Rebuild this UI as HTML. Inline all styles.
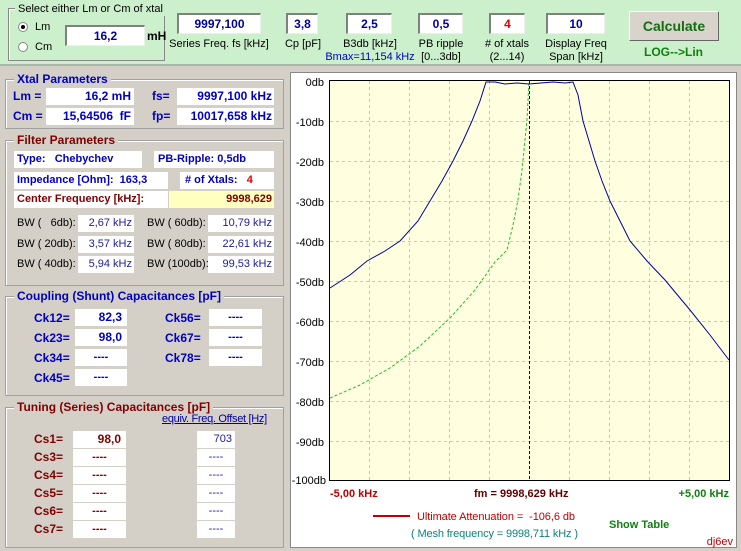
<!DOCTYPE html>
<html><head><meta charset="utf-8"><style>
*{box-sizing:border-box}
body{margin:0;width:741px;height:551px;background:#d4d0c8;font-family:"Liberation Sans",Arial,sans-serif;font-size:11px;position:relative;overflow:hidden;white-space:nowrap}
.a{position:absolute}
.top{left:0;top:0;width:741px;height:66px;background:#ccf0cc;border-bottom:2px solid #a8b8a8}
.inp{position:absolute;background:#fff;border-top:2px solid #808080;border-left:2px solid #808080;border-right:1px solid #eee;border-bottom:1px solid #eee;font-weight:bold;color:#0000a0;text-align:center;font-size:12px;line-height:18px}
.lbl{position:absolute;text-align:center;font-size:11px;color:#000;line-height:13px}
.grp{position:absolute;border:1px solid #a0a0a0;box-shadow:1px 1px 0 #fff inset}
.gt{position:absolute;top:-8px;left:8px;padding:0 3px;font-weight:bold;font-size:12px;background:#d4d0c8;line-height:14px}
.f{position:absolute;background:#fff;height:17px;line-height:17px;font-size:11px}
.b{font-weight:bold}
.blue{color:#0000c0}.dred{color:#800000}
.c{font-size:12px}
</style></head><body>
<div class="a top"></div>
<div class="grp" style="left:8px;top:8px;width:157px;height:53px;border-color:#888"><div class="gt" style="background:#ccf0cc;font-weight:normal;font-size:11px;top:-7px;left:6px">Select either Lm or Cm of xtal</div></div>
<div class="a" style="left:18px;top:22px;width:10px;height:10px;border-radius:50%;background:#fff;border:1px solid #888"><div class="a" style="left:2px;top:2px;width:4px;height:4px;border-radius:50%;background:#000"></div></div>
<div class="a" style="left:35px;top:21px">Lm</div>
<div class="a" style="left:18px;top:42px;width:10px;height:10px;border-radius:50%;background:#fff;border:1px solid #888"></div>
<div class="a" style="left:35px;top:41px">Cm</div>
<div class="inp" style="left:65px;top:25px;width:80px;height:21px">16,2</div>
<div class="a b" style="left:147px;top:29px;font-size:12px">mH</div>

<div class="inp" style="left:177px;top:13px;width:84px;height:21px">9997,100</div>
<div class="lbl" style="left:169px;top:38px;width:100px">Series Freq. fs [kHz]</div>
<div class="inp" style="left:286px;top:13px;width:32px;height:21px">3,8</div>
<div class="lbl" style="left:282px;top:38px;width:42px">Cp [pF]</div>
<div class="inp" style="left:346px;top:13px;width:46px;height:21px">2,5</div>
<div class="lbl" style="left:335px;top:38px;width:70px">B3db [kHz]</div>
<div class="lbl" style="left:322px;top:51px;width:96px;color:#0000c0">Bmax=11,154 kHz</div>
<div class="inp" style="left:418px;top:13px;width:45px;height:21px">0,5</div>
<div class="lbl" style="left:411px;top:38px;width:60px">PB ripple<br>[0...3db]</div>
<div class="inp" style="left:489px;top:13px;width:36px;height:21px;color:#e00000">4</div>
<div class="lbl" style="left:477px;top:38px;width:60px"># of xtals<br>(2...14)</div>
<div class="inp" style="left:546px;top:13px;width:59px;height:21px">10</div>
<div class="lbl" style="left:540px;top:38px;width:72px">Display Freq<br>Span [kHz]</div>
<div class="a" style="left:629px;top:11px;width:90px;height:30px;background:#d8d4cc;border:1px solid #fff;border-right-color:#666;border-bottom-color:#666;text-align:center;line-height:28px;font-weight:bold;font-size:14px;color:#107010">Calculate</div>
<div class="a b" style="left:644px;top:45px;color:#108010;font-size:12px">LOG--&gt;Lin</div>

<div class="grp" style="left:5px;top:79px;width:279px;height:50px"><div class="gt blue" style="left:8px">Xtal Parameters</div></div>
<div class="a b blue c" style="left:13px;top:89px">Lm =</div>
<div class="f b blue c" style="left:46px;top:88px;width:88px;text-align:right;padding-right:3px">16,2 mH</div>
<div class="a b blue c" style="left:152px;top:89px">fs=</div>
<div class="f b blue c" style="left:177px;top:88px;width:97px;text-align:right;padding-right:2px">9997,100 kHz</div>
<div class="a b blue c" style="left:13px;top:109px">Cm =</div>
<div class="f b blue c" style="left:46px;top:108px;width:88px;text-align:right;padding-right:3px">15,64506 &nbsp;fF</div>
<div class="a b blue c" style="left:152px;top:109px">fp=</div>
<div class="f b blue c" style="left:177px;top:108px;width:97px;text-align:right;padding-right:2px">10017,658 kHz</div>

<div class="grp" style="left:5px;top:140px;width:279px;height:146px"><div class="gt dred">Filter Parameters</div></div>
<div class="f b blue" style="left:14px;top:151px;width:128px;padding-left:3px">Type: &nbsp;&nbsp;Chebychev</div>
<div class="f b blue" style="left:154px;top:151px;width:120px;padding-left:4px">PB-Ripple: 0,5db</div>
<div class="f b blue" style="left:14px;top:172px;width:154px;padding-left:3px">Impedance [Ohm]: &nbsp;163,3</div>
<div class="f b blue" style="left:180px;top:172px;width:94px;padding-left:5px"># of Xtals: &nbsp;&nbsp;<span style="color:#e00000">4</span></div>
<div class="f b dred" style="left:14px;top:191px;width:154px;padding-left:3px">Center Frequency [kHz]:</div>
<div class="f b dred" style="left:169px;top:191px;width:105px;background:#ffffc0;text-align:right;padding-right:2px">9998,629</div>
<div class="a" style="left:17px;top:217px">BW ( &nbsp;&nbsp;6db):</div>
<div class="f" style="left:78px;top:215px;width:56px;text-align:right;padding-right:2px;color:#2020a0">2,67 kHz</div>
<div class="a" style="left:147px;top:217px">BW ( 60db):</div>
<div class="f" style="left:208px;top:215px;width:66px;text-align:right;padding-right:2px;color:#2020a0">10,79 kHz</div>
<div class="a" style="left:17px;top:238px">BW ( 20db):</div>
<div class="f" style="left:78px;top:236px;width:56px;text-align:right;padding-right:2px;color:#2020a0">3,57 kHz</div>
<div class="a" style="left:147px;top:238px">BW ( 80db):</div>
<div class="f" style="left:208px;top:236px;width:66px;text-align:right;padding-right:2px;color:#2020a0">22,61 kHz</div>
<div class="a" style="left:17px;top:258px">BW ( 40db):</div>
<div class="f" style="left:78px;top:256px;width:56px;text-align:right;padding-right:2px;color:#2020a0">5,94 kHz</div>
<div class="a" style="left:147px;top:258px">BW (100db):</div>
<div class="f" style="left:208px;top:256px;width:66px;text-align:right;padding-right:2px;color:#2020a0">99,53 kHz</div>

<div class="grp" style="left:5px;top:296px;width:279px;height:100px"><div class="gt blue">Coupling (Shunt) Capacitances [pF]</div></div>
<div class="a b blue c" style="left:34px;top:311px">Ck12=</div><div class="f b blue c" style="left:75px;top:309px;width:52px;text-align:right;padding-right:5px">82,3</div>
<div class="a b blue c" style="left:34px;top:331px">Ck23=</div><div class="f b blue c" style="left:75px;top:329px;width:52px;text-align:right;padding-right:5px">98,0</div>
<div class="a b blue c" style="left:34px;top:351px">Ck34=</div><div class="f b blue" style="left:75px;top:349px;width:52px;text-align:center">----</div>
<div class="a b blue c" style="left:34px;top:371px">Ck45=</div><div class="f b blue" style="left:75px;top:369px;width:52px;text-align:center">----</div>
<div class="a b blue c" style="left:165px;top:311px">Ck56=</div><div class="f b blue" style="left:209px;top:309px;width:53px;text-align:center">----</div>
<div class="a b blue c" style="left:165px;top:331px">Ck67=</div><div class="f b blue" style="left:209px;top:329px;width:53px;text-align:center">----</div>
<div class="a b blue c" style="left:165px;top:351px">Ck78=</div><div class="f b blue" style="left:209px;top:349px;width:53px;text-align:center">----</div>

<div class="grp" style="left:5px;top:407px;width:279px;height:141px"><div class="gt dred">Tuning (Series) Capacitances [pF]</div></div>
<div class="a" style="left:162px;top:413px;color:#0000a0;text-decoration:underline;font-size:11px;letter-spacing:-0.3px">equiv. Freq. Offset [Hz]</div>
<div class="a b dred c" style="left:34px;top:432px">Cs1=</div><div class="f b dred c" style="left:73px;top:431px;width:53px;text-align:right;padding-right:5px">98,0</div><div class="f" style="left:197px;top:431px;width:38px;text-align:right;padding-right:3px;color:#2020a0">703</div>
<div class="a b dred c" style="left:34px;top:450px">Cs3=</div><div class="f b dred" style="left:73px;top:449px;width:53px;text-align:center">----</div><div class="f" style="left:197px;top:449px;width:38px;text-align:center;color:#2020a0">----</div>
<div class="a b dred c" style="left:34px;top:468px">Cs4=</div><div class="f b dred" style="left:73px;top:467px;width:53px;text-align:center">----</div><div class="f" style="left:197px;top:467px;width:38px;text-align:center;color:#2020a0">----</div>
<div class="a b dred c" style="left:34px;top:486px">Cs5=</div><div class="f b dred" style="left:73px;top:485px;width:53px;text-align:center">----</div><div class="f" style="left:197px;top:485px;width:38px;text-align:center;color:#2020a0">----</div>
<div class="a b dred c" style="left:34px;top:504px">Cs6=</div><div class="f b dred" style="left:73px;top:503px;width:53px;text-align:center">----</div><div class="f" style="left:197px;top:503px;width:38px;text-align:center;color:#2020a0">----</div>
<div class="a b dred c" style="left:34px;top:522px">Cs7=</div><div class="f b dred" style="left:73px;top:521px;width:53px;text-align:center">----</div><div class="f" style="left:197px;top:521px;width:38px;text-align:center;color:#2020a0">----</div>

<div class="a" style="left:290px;top:72px;width:447px;height:476px;background:#fff;border:1px solid #888"></div>
<svg class="a" style="left:0;top:0" width="741" height="551">
<rect x="329.5" y="80.5" width="400" height="400" fill="#ffffe0" stroke="#000"/>
<g stroke="#c8c8b8" stroke-dasharray="3,3">
<line x1="369.5" y1="81" x2="369.5" y2="480"/><line x1="409.5" y1="81" x2="409.5" y2="480"/><line x1="449.5" y1="81" x2="449.5" y2="480"/><line x1="489.5" y1="81" x2="489.5" y2="480"/><line x1="569.5" y1="81" x2="569.5" y2="480"/><line x1="609.5" y1="81" x2="609.5" y2="480"/><line x1="649.5" y1="81" x2="649.5" y2="480"/><line x1="689.5" y1="81" x2="689.5" y2="480"/>
<line x1="330" y1="121.5" x2="729" y2="121.5"/><line x1="330" y1="161.5" x2="729" y2="161.5"/><line x1="330" y1="201.5" x2="729" y2="201.5"/><line x1="330" y1="241.5" x2="729" y2="241.5"/><line x1="330" y1="281.5" x2="729" y2="281.5"/><line x1="330" y1="321.5" x2="729" y2="321.5"/><line x1="330" y1="361.5" x2="729" y2="361.5"/><line x1="330" y1="401.5" x2="729" y2="401.5"/><line x1="330" y1="441.5" x2="729" y2="441.5"/>
</g>
<line x1="529.5" y1="81" x2="529.5" y2="480" stroke="#0000a0" stroke-dasharray="3,2"/>
<polyline fill="none" stroke="#20c020" stroke-dasharray="3,2" points="330,398 360,385 390,368 420,346 450,318 475,290 495,262 507,250 513,225 518,200 522,170 525,140 527,120 528,100 529,82"/>
<polyline fill="none" stroke="#0000a0" points="330,288 350,275 367,261 385,251 400,241 418,221 430,201 442,181 453,161 463,141 472,121 480,101 486,82 495,82 505,84 517,83 529,84 541,83 553,82 565,83 573,82 578,95 583,121 589,141 595,161 602,181 610,201 620,221 630,241 647,261 665,280 690,310 710,335 729,360"/>
<g font-family="Liberation Sans,Arial,sans-serif" font-size="11" text-anchor="end">
<text x="324" y="86">0db</text><text x="324" y="126">-10db</text><text x="324" y="166">-20db</text><text x="324" y="206">-30db</text><text x="324" y="246">-40db</text><text x="324" y="286">-50db</text><text x="324" y="326">-60db</text><text x="324" y="366">-70db</text><text x="324" y="406">-80db</text><text x="324" y="446">-90db</text><text x="326" y="484">-100db</text>
</g>
<g font-family="Liberation Sans,Arial,sans-serif" font-size="11" font-weight="bold">
<text x="330" y="497" fill="#c00000">-5,00 kHz</text>
<text x="474" y="497" fill="#600000">fm = 9998,629 kHz</text>
<text x="729" y="497" fill="#108010" text-anchor="end">+5,00 kHz</text>
<text x="609" y="528" fill="#108010">Show Table</text>
</g>
<line x1="373" y1="516" x2="410" y2="516" stroke="#c00000" stroke-width="2"/>
<g font-family="Liberation Sans,Arial,sans-serif" font-size="11">
<text x="417" y="520" fill="#c00000" textLength="158">Ultimate Attenuation = &#160;-106,6 db</text>
<text x="411" y="537" fill="#108080" textLength="167">( Mesh frequency = 9998,711 kHz )</text>
<text x="733" y="545" fill="#c00000" text-anchor="end">dj6ev</text>
</g>
</svg>
</body></html>
